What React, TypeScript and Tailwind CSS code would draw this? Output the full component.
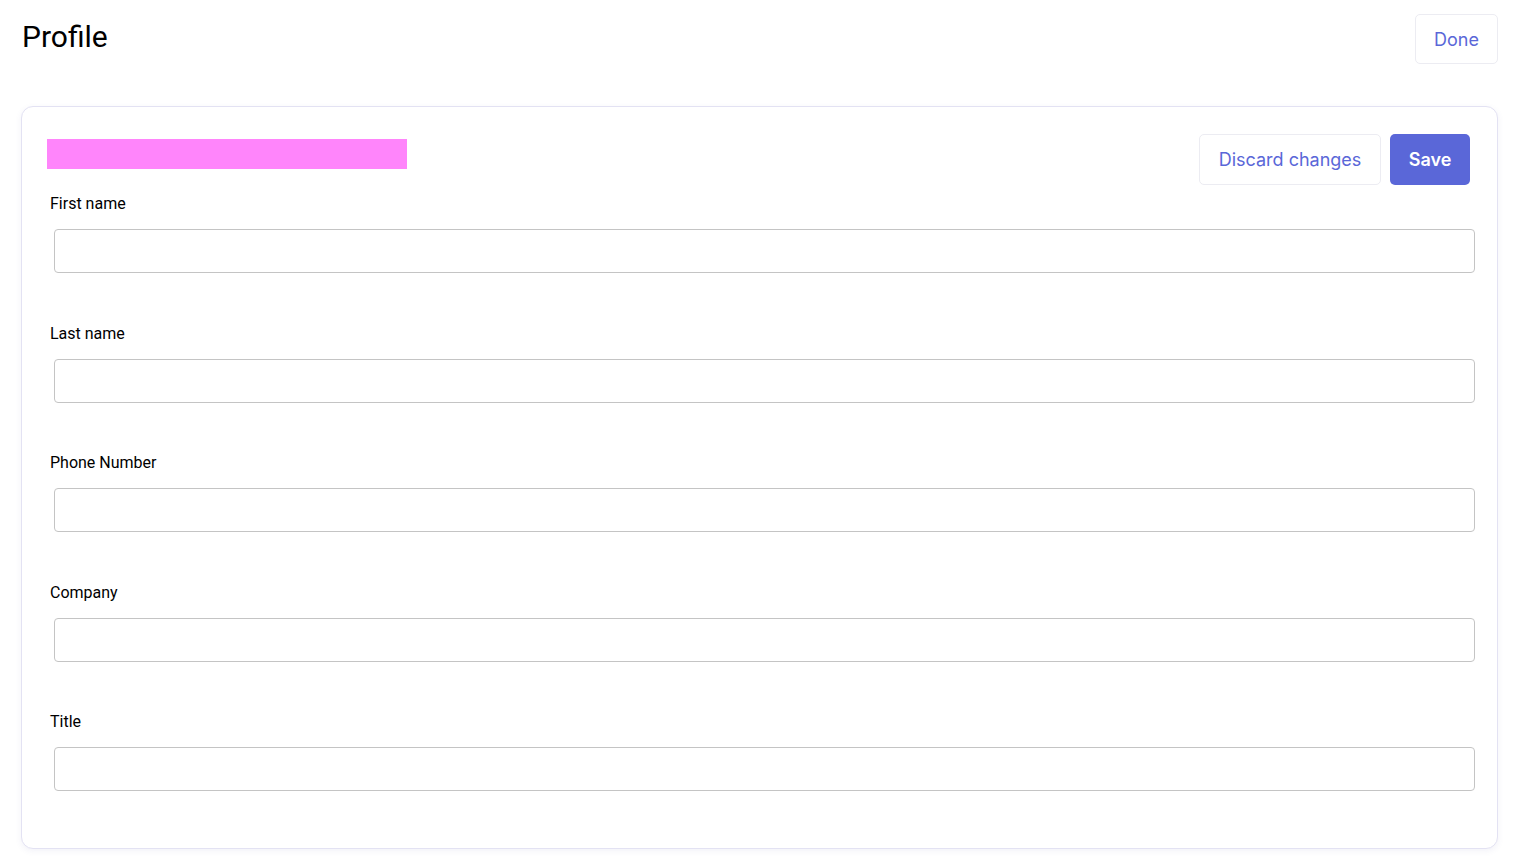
export default function App() {
  const fields = ['First name', 'Last name', 'Phone Number', 'Company', 'Title']

  return (
    <div className="min-h-screen bg-white pl-[21px] pr-[30px] pt-[14px] font-['Inter',sans-serif] text-black">
      {/* Header */}
      <div className="flex items-start justify-between">
        <h1 className="ml-[1px] mt-[4px] font-['Roboto',sans-serif] text-[30px] leading-[38px] font-normal">Profile</h1>
        <button className="h-[50px] w-[83px] rounded-[5px] border border-[#ececf2] bg-white text-[18px] text-[#5a67d8]">
          Done
        </button>
      </div>

      {/* Card */}
      <div className="mt-[42px] rounded-[12px] border border-[#e3e2f3] bg-white pt-[27px] pb-[57px] pl-[25px] pr-[21px] shadow-[0_2px_6px_rgba(90,90,160,0.08)]">
        <div className="flex items-start justify-between">
          <div className="mt-[5px] h-[30px] w-[360px] bg-[#ff85fb]" />
          <div className="mr-[6px] flex gap-[9px]">
            <button className="h-[51px] w-[182px] rounded-[5px] border border-[#ececf2] bg-white text-[18px] text-[#5a67d8]">
              Discard changes
            </button>
            <button className="h-[51px] w-[80px] rounded-[5px] bg-[#5a67d8] text-[18px] font-semibold text-white">
              Save
            </button>
          </div>
        </div>

        <div className="mt-[9px] flex flex-col gap-[50.5px]">
          {fields.map((f) => (
            <div key={f} className="flex flex-col">
              <label className="ml-[3px] font-['Roboto',sans-serif] text-[16px] leading-[20px]">{f}</label>
              <input
                type="text"
                className="mt-[15px] ml-[7px] mr-[1px] h-[44px] rounded-[4px] border border-[#c4c4c4] bg-white px-3 outline-none"
              />
            </div>
          ))}
        </div>
      </div>
    </div>
  )
}
